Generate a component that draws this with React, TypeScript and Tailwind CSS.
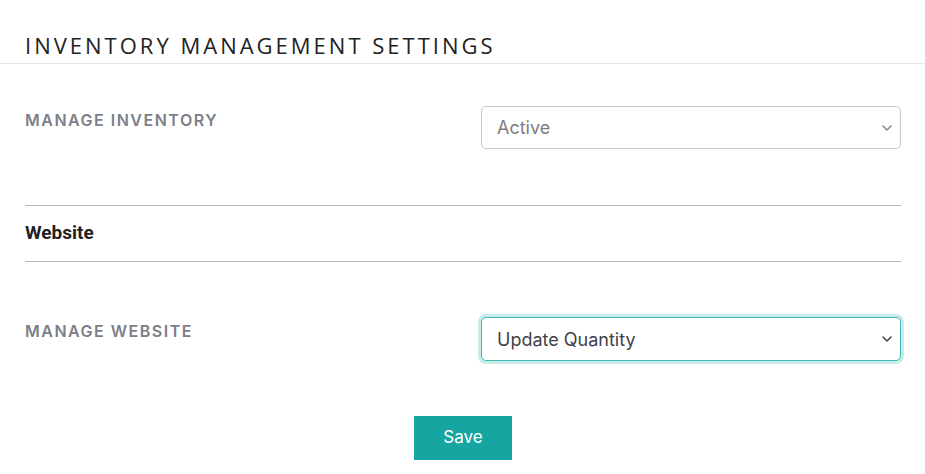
import { useState } from 'react'

function Chevron({ className }: { className: string }) {
  return (
    <svg viewBox="0 0 12 8" className={className} fill="none" stroke="currentColor" strokeWidth="1.6" strokeLinecap="round" strokeLinejoin="round">
      <path d="M2 2l4 4 4-4" />
    </svg>
  )
}

function SelectBox({ value, focused }: { value: string; focused?: boolean }) {
  return (
    <div
      className={
        focused
          ? 'flex items-center justify-between w-[420px] h-[44px] rounded-[5px] border border-[#3fb8b4] shadow-[0_0_0_3px_#c9ecea] bg-white pl-[15px] pr-[7px]'
          : 'flex items-center justify-between w-[420px] h-[43px] rounded-[5px] border border-[#c8c8c8] bg-white pl-[15px] pr-[7px]'
      }
    >
      <span className={focused ? 'text-[18px] text-[#3f4247]' : 'text-[18px] text-[#7b7d82]'}>{value}</span>
      <Chevron className={focused ? 'w-[12px] h-[8px] text-[#444]' : 'w-[12px] h-[8px] text-[#888]'} />
    </div>
  )
}

export default function App() {
  const [inventory] = useState('Active')
  const [website] = useState('Update Quantity')

  return (
    <div className="w-[925px] h-[474px] bg-white font-['Inter','Open_Sans',sans-serif] overflow-hidden">
      <div className="pt-[33px] pb-[6px] pl-[25px] border-b border-[#e6e6e6]">
        <h1 className="text-[22px] leading-[24px] tracking-[3px] text-[#222] font-['Open_Sans',sans-serif]">
          INVENTORY MANAGEMENT SETTINGS
        </h1>
      </div>

      <div className="pl-[25px] pr-[24px]">
        <div className="flex justify-between pt-[42px] pb-[56px]">
          <span className="pt-[2px] text-[16px] leading-[24px] font-semibold tracking-[1.5px] text-[#7c7f87]">MANAGE INVENTORY</span>
          <SelectBox value={inventory} />
        </div>

        <div className="border-t border-b border-[#b8b8b8] h-[57px] flex items-center">
          <span className="text-[19px] font-bold text-[#222] font-['Roboto',sans-serif]">Website</span>
        </div>

        <div className="flex justify-between pt-[55px]">
          <span className="pt-[2px] text-[16px] leading-[24px] font-semibold tracking-[1.5px] text-[#7c7f87]">MANAGE WEBSITE</span>
          <SelectBox value={website} focused />
        </div>

        <div className="flex justify-center pt-[55px]">
          <button className="w-[98px] h-[44px] bg-[#17a5a1] text-white text-[17px]">Save</button>
        </div>
      </div>
    </div>
  )
}
